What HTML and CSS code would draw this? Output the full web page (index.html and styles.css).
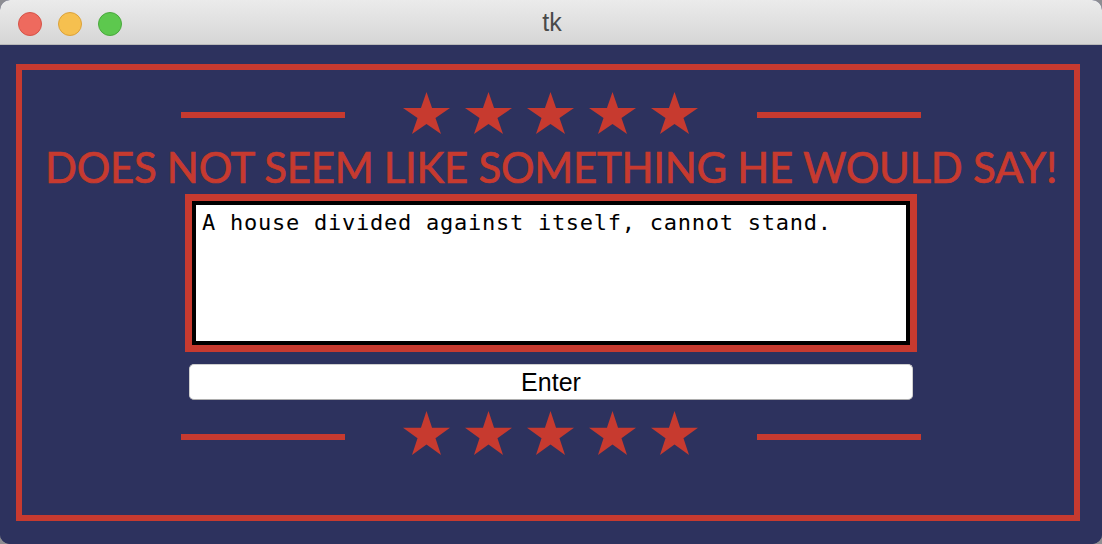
FILE: index.html
```html
<!DOCTYPE html>
<html>
<head>
<meta charset="utf-8">
<link rel="stylesheet" href="styles.css">
</head>
<body>
<div class="window">
  <div class="titlebar">
    <div class="lights">
      <span class="light red"></span>
      <span class="light yellow"></span>
      <span class="light green"></span>
    </div>
    <div class="wintitle">tk</div>
  </div>
  <div class="content">
    <div class="frame">
      <div class="deco">
        <span class="rule"></span>
        <div class="stars">
          <svg class="star" viewBox="2.45 0 95.1 90.45" preserveAspectRatio="none"><polygon points="50,0 61.23,34.55 97.55,34.55 68.17,55.9 79.39,90.45 50,69.1 20.61,90.45 31.83,55.9 2.45,34.55 38.77,34.55"/></svg>
          <svg class="star" viewBox="2.45 0 95.1 90.45" preserveAspectRatio="none"><polygon points="50,0 61.23,34.55 97.55,34.55 68.17,55.9 79.39,90.45 50,69.1 20.61,90.45 31.83,55.9 2.45,34.55 38.77,34.55"/></svg>
          <svg class="star" viewBox="2.45 0 95.1 90.45" preserveAspectRatio="none"><polygon points="50,0 61.23,34.55 97.55,34.55 68.17,55.9 79.39,90.45 50,69.1 20.61,90.45 31.83,55.9 2.45,34.55 38.77,34.55"/></svg>
          <svg class="star" viewBox="2.45 0 95.1 90.45" preserveAspectRatio="none"><polygon points="50,0 61.23,34.55 97.55,34.55 68.17,55.9 79.39,90.45 50,69.1 20.61,90.45 31.83,55.9 2.45,34.55 38.77,34.55"/></svg>
          <svg class="star" viewBox="2.45 0 95.1 90.45" preserveAspectRatio="none"><polygon points="50,0 61.23,34.55 97.55,34.55 68.17,55.9 79.39,90.45 50,69.1 20.61,90.45 31.83,55.9 2.45,34.55 38.77,34.55"/></svg>
        </div>
        <span class="rule"></span>
      </div>
      <h1 class="headline">DOES NOT SEEM LIKE SOMETHING HE WOULD SAY!</h1>
      <div class="textbox">
        <div class="textarea">A house divided against itself, cannot stand.</div>
      </div>
      <button class="enter">Enter</button>
      <div class="deco bottom">
        <span class="rule"></span>
        <div class="stars">
          <svg class="star" viewBox="2.45 0 95.1 90.45" preserveAspectRatio="none"><polygon points="50,0 61.23,34.55 97.55,34.55 68.17,55.9 79.39,90.45 50,69.1 20.61,90.45 31.83,55.9 2.45,34.55 38.77,34.55"/></svg>
          <svg class="star" viewBox="2.45 0 95.1 90.45" preserveAspectRatio="none"><polygon points="50,0 61.23,34.55 97.55,34.55 68.17,55.9 79.39,90.45 50,69.1 20.61,90.45 31.83,55.9 2.45,34.55 38.77,34.55"/></svg>
          <svg class="star" viewBox="2.45 0 95.1 90.45" preserveAspectRatio="none"><polygon points="50,0 61.23,34.55 97.55,34.55 68.17,55.9 79.39,90.45 50,69.1 20.61,90.45 31.83,55.9 2.45,34.55 38.77,34.55"/></svg>
          <svg class="star" viewBox="2.45 0 95.1 90.45" preserveAspectRatio="none"><polygon points="50,0 61.23,34.55 97.55,34.55 68.17,55.9 79.39,90.45 50,69.1 20.61,90.45 31.83,55.9 2.45,34.55 38.77,34.55"/></svg>
          <svg class="star" viewBox="2.45 0 95.1 90.45" preserveAspectRatio="none"><polygon points="50,0 61.23,34.55 97.55,34.55 68.17,55.9 79.39,90.45 50,69.1 20.61,90.45 31.83,55.9 2.45,34.55 38.77,34.55"/></svg>
        </div>
        <span class="rule"></span>
      </div>
    </div>
  </div>
</div>
</body>
</html>
```

FILE: styles.css
```css
html, body {
  margin: 0;
  padding: 0;
  background: #8d8d92;
}
.window {
  width: 1102px;
  height: 544px;
  border-radius: 10px;
  overflow: hidden;
  display: flex;
  flex-direction: column;
  background: #2d325e;
}
.titlebar {
  height: 44px;
  border-bottom: 1px solid #b9b9b9;
  background: linear-gradient(#ebebeb, #d6d6d6);
  position: relative;
  display: flex;
  align-items: center;
  justify-content: center;
  flex: none;
}
.lights {
  position: absolute;
  left: 18px;
  top: 12px;
  display: flex;
  gap: 16px;
}
.light {
  width: 22px;
  height: 22px;
  border-radius: 50%;
  border: 1px solid rgba(0,0,0,0.12);
}
.light.red { background: #ee6a5e; border-color: #d65348; }
.light.yellow { background: #f6c04f; border-color: #dca23a; }
.light.green { background: #5dc84e; border-color: #4aa83d; }
.wintitle {
  font-family: "Liberation Sans", Arial, sans-serif;
  font-size: 25px;
  color: #4a4a4a;
  padding-left: 2px;
}
.content {
  flex: 1;
  background: #2d325e;
}
.frame {
  margin: 19px 22px 0 16px;
  height: 457px;
  box-sizing: border-box;
  border: 6px solid #c73a2f;
  padding: 22px 0 0 6px;
  display: flex;
  flex-direction: column;
  align-items: center;
}
.deco {
  display: flex;
  align-items: flex-end;
  height: 42px;
}
.rule {
  display: block;
  width: 164px;
  height: 6px;
  background: #c73a2f;
  margin-bottom: 16px;
}
.stars {
  display: flex;
  gap: 15px;
  margin: 0 59px 0 58px;
}
.star {
  display: block;
  width: 47px;
  height: 42px;
  fill: #c73a2f;
}
.headline {
  margin: 12px 0 0 0;
  font-family: Lato, "Open Sans", sans-serif;
  font-weight: 400;
  font-size: 42px;
  line-height: 42px;
  letter-spacing: -0.3px;
  -webkit-text-stroke: 0.7px #c73a2f;
  color: #c73a2f;
  white-space: nowrap;
}
.textbox {
  margin-top: 6px;
  width: 732px;
  height: 158px;
  box-sizing: border-box;
  border: 7px solid #c73a2f;
}
.textarea {
  height: 100%;
  box-sizing: border-box;
  border: 4px solid #000;
  background: #fff;
  padding: 5px 5px 5px 6px;
  font-family: "DejaVu Sans Mono", "Liberation Mono", monospace;
  font-size: 22px;
  letter-spacing: 0.75px;
  color: #000;
  white-space: pre;
}
.enter {
  margin-top: 12px;
  width: 724px;
  height: 36px;
  box-sizing: border-box;
  background: #fff;
  border: 1px solid #cfcfcf;
  border-bottom-color: #adadad;
  border-radius: 5px;
  font-family: "Liberation Sans", Arial, sans-serif;
  font-size: 25px;
  color: #000;
  padding: 0;
  line-height: 32px;
}
.deco.bottom {
  margin-top: 11px;
  height: 44px;
}
.deco.bottom .star {
  height: 44px;
}
.deco.bottom .rule {
  margin-bottom: 15px;
}
```
